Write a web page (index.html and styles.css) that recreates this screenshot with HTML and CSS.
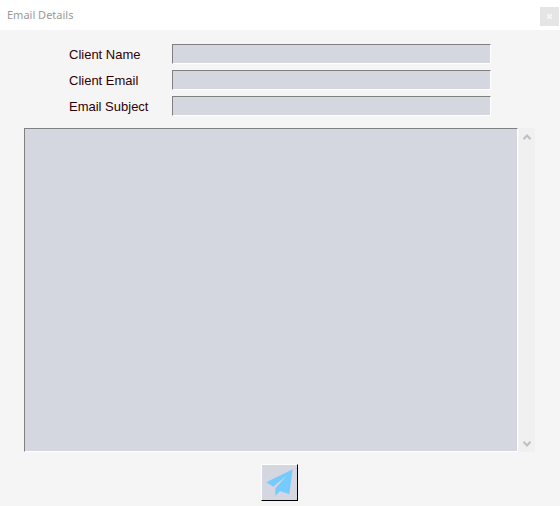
FILE: index.html
```html
<!DOCTYPE html>
<html lang="en">
<head>
<meta charset="utf-8">
<title>Email Details</title>
<link rel="stylesheet" href="styles.css">
</head>
<body>
<header class="titlebar">
  <h1 class="title">Email Details</h1>
  <button class="close" type="button" aria-label="Close">
    <svg width="5" height="5" viewBox="0 0 5 5" aria-hidden="true"><path d="M0 0L5 5M5 0L0 5"/></svg>
  </button>
</header>
<form class="form">
  <div class="fields">
    <label for="name">Client Name</label><input class="sunken" id="name" type="text">
    <label for="email">Client Email</label><input class="sunken" id="email" type="text">
    <label for="subject">Email Subject</label><input class="sunken" id="subject" type="text">
  </div>
  <div class="message">
    <textarea class="sunken" aria-label="Message"></textarea>
    <div class="scrollbar" aria-hidden="true">
      <svg width="8" height="6" viewBox="0 0 8 6"><path d="M0.5 5.2L4 1.5L7.5 5.2"/></svg>
      <svg width="8" height="6" viewBox="0 0 8 6"><path d="M0.5 0.8L4 4.5L7.5 0.8"/></svg>
    </div>
  </div>
  <button class="send" type="submit" aria-label="Send">
    <svg viewBox="0 0 105 105" aria-hidden="true">
      <path d="M92 13L13 52L34 65L76 30L40 70L40 92L54 78L82 88Z"/>
    </svg>
  </button>
</form>
</body>
</html>
```

FILE: styles.css
```css
* { box-sizing: border-box; }
body {
  margin: 0;
  min-height: 100vh;
  display: flex;
  flex-direction: column;
  background: #f5f5f5;
  font-family: "Liberation Sans", Arial, sans-serif;
}
.titlebar {
  display: flex;
  justify-content: space-between;
  align-items: center;
  height: 30px;
  padding: 3px 1px 0 7px;
  background: #fff;
}
.title {
  margin: 0;
  padding-bottom: 3px;
  font: 400 11px/16px "Noto Sans", "Open Sans", sans-serif;
  color: #999;
}
.close {
  display: grid;
  place-items: center;
  width: 19px;
  height: 19px;
  padding: 0;
  border: 0;
  background: #e5e5e5;
}
.close path { fill: none; stroke: #f5f5f5; stroke-width: 2; }
.form {
  flex: 1;
  display: flex;
  flex-direction: column;
  align-items: center;
  gap: 12px;
  padding: 14px 25px 5px 24px;
}
.fields {
  align-self: stretch;
  display: grid;
  grid-template-columns: 103px 1fr;
  row-gap: 6px;
  padding: 0 44px 0 45px;
}
.fields label {
  padding-top: 2px;
  font-size: 13px;
  line-height: 18px;
  color: #300008;
}
.sunken {
  min-width: 0;
  margin: 0;
  padding: 1px 2px;
  border: 1px solid;
  border-color: #808080 #fff #fff #808080;
  border-radius: 0;
  outline: 0;
  background: #d4d7df;
  font: 13px "Liberation Sans", Arial, sans-serif;
}
.fields .sunken { height: 20px; }
.message {
  flex: 1;
  align-self: stretch;
  display: flex;
  gap: 1px;
}
.message .sunken { flex: 1; resize: none; }
.scrollbar {
  display: flex;
  flex-direction: column;
  justify-content: space-between;
  align-items: center;
  width: 16px;
  padding: 6px 0 5px;
  background: #f0f0f0;
}
.scrollbar path { fill: none; stroke: #bfbfbf; stroke-width: 2; }
.send {
  width: 37px;
  height: 37px;
  padding: 0;
  border: 1px solid;
  border-color: #fff #000 #000 #fff;
  background: #d4d7df;
}
.send svg { display: block; width: 100%; }
.send path { fill: #75cbff; }
```
